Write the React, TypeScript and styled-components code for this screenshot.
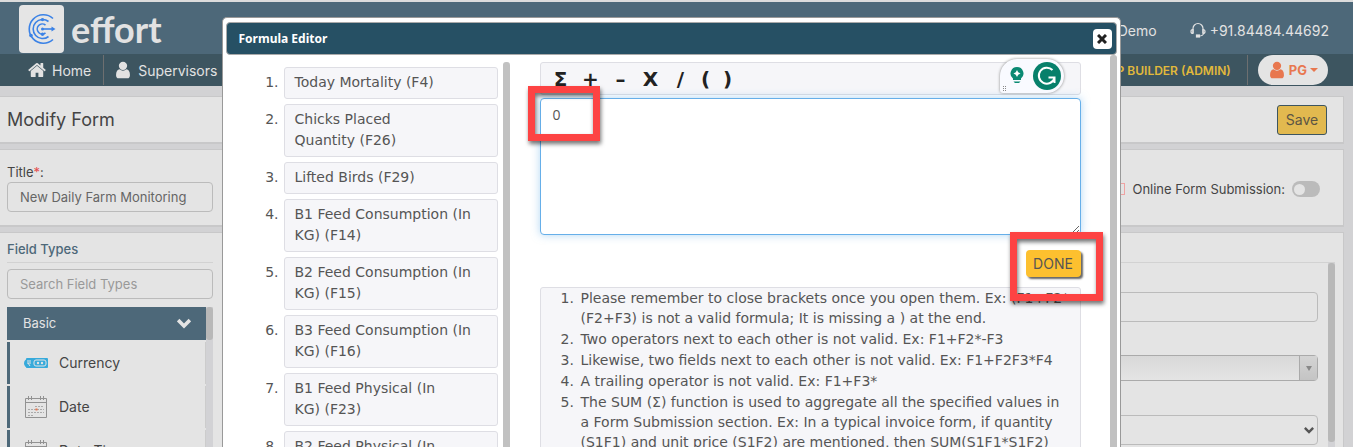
import React from "react";
import styled, { createGlobalStyle } from "styled-components";

const ui = `Inter, "Liberation Sans", sans-serif`;
const body = `"DejaVu Sans", Verdana, sans-serif`;

const GlobalStyle = createGlobalStyle`
  * { box-sizing: border-box; }
  body { margin: 0; background: #d2d2d4; font-family: ${ui}; font-size: 13px; color: #444; }
  ol, ul { margin: 0; padding: 0; list-style: none; }
  button, input, textarea, select { font: inherit; color: inherit; }
  h1, h2, h3, p { margin: 0; font-weight: 400; }
  a { color: inherit; text-decoration: none; }
`;

const Page = styled.div`
  position: relative;
  height: 100vh;
  overflow: hidden;
`;
const Header = styled.header`
  display: flex;
  justify-content: space-between;
  align-items: center;
  height: 54px;
  padding: 1px 24px 0 19px;
  border-top: 2px solid #dcdcdc;
  background: #4d6879;
  color: #e2e2e2;
`;
const Brand = styled.a`
  display: flex;
  align-items: center;
  gap: 7px;
  font: 700 36px/46px Lato, sans-serif;
`;
const BrandMark = styled.span`
  display: grid;
  place-items: center;
  width: 45px;
  height: 48px;
  border-radius: 4px;
  background: #e5e5e5;
`;
const Contact = styled.div`
  display: flex;
  align-items: center;
  gap: 33px;
  padding-top: 3px;
  font-size: 14px;
`;
const Phone = styled.a`
  display: flex;
  align-items: center;
  gap: 4px;
`;
const Nav = styled.nav`
  display: flex;
  justify-content: space-between;
  height: 32px;
  padding: 0 25px 0 18px;
  background: #3d5560;
  color: #e2e2e2;
`;
const NavGroup = styled.div`
  display: flex;
  align-items: center;
`;
const NavLink = styled.a`
  display: flex;
  align-items: center;
  gap: 6px;
  height: 30px;
  padding: 0 12px 0 10px;
  border-right: 1px solid #6d6f70;
  font-size: 14px;
`;
const Role = styled.span`
  display: flex;
  align-items: center;
  height: 30px;
  padding-right: 16px;
  margin-right: 10px;
  border-right: 1px solid #6d6f70;
  color: #e2b93b;
  font-size: 12px;
  font-weight: 600;
`;
const UserButton = styled.button`
  display: flex;
  align-items: center;
  gap: 3px;
  height: 30px;
  padding: 0 10px;
  border: 0;
  border-radius: 15px;
  background: #e4e4e4;
  color: #e8774f;
  font-weight: 700;
`;
const Main = styled.main`
  display: flex;
  flex-direction: column;
  gap: 5px;
  padding: 10px 9px 0 0;
`;
const Card = styled.section`
  display: flex;
  justify-content: space-between;
  border: 1px solid #c8c8c9;
  border-left: 0;
  border-bottom-width: 2px;
  background: #e4e4e4;
`;
const TitleCard = styled(Card)`
  align-items: center;
  height: 48px;
  padding: 0 16px 0 7px;
`;
const PageTitle = styled.h1`
  font-size: 18px;
`;
const SaveButton = styled.button`
  width: 50px;
  height: 30px;
  padding: 0;
  border: 1px solid #3d5560;
  border-radius: 3px;
  background: #e2b94f;
  color: #5c5544;
  font-size: 14px;
`;
const FormCard = styled(Card)`
  height: 78px;
  padding: 12px 23px 0 7px;
`;
const Label = styled.label`
  display: block;
  height: 20px;
  line-height: 20px;
`;
const Star = styled.span`
  color: #e64c4c;
`;
const TextInput = styled.input`
  display: block;
  width: 206px;
  height: 30px;
  padding: 0 12px;
  border: 1px solid #bbb;
  border-radius: 4px;
  background: transparent;
  color: #666;
  &::placeholder { color: #999; opacity: 1; }
`;
const SwitchRow = styled.label`
  display: flex;
  align-items: center;
  align-self: flex-start;
  gap: 7px;
  height: 20px;
  margin-top: 17px;
`;
const Flag = styled.span`
  width: 12px;
  height: 12px;
  border: 1px solid #efa3a3;
`;
const Switch = styled.input`
  appearance: none;
  display: flex;
  align-items: center;
  width: 28px;
  height: 16px;
  margin: 0;
  padding: 2px;
  border-radius: 8px;
  background: #bbb;
  &::before {
    content: "";
    width: 11px;
    height: 11px;
    border-radius: 6px;
    background: #e4e4e4;
  }
`;
const BuilderCard = styled(Card)`
  height: 400px;
  padding: 0 8px 0 7px;
`;
const Sidebar = styled.aside`
  width: 206px;
`;
const SideTitle = styled.h2`
  height: 30px;
  margin-bottom: 6px;
  border-bottom: 1px solid #d2d2d2;
  color: #4d6879;
  font-size: 13px;
  font-weight: 500;
  line-height: 32px;
`;
const Palette = styled.div`
  display: flex;
  margin-top: 8px;
`;
const Track = styled.div`
  width: 7px;
  background: #d2d2d5;
`;
const Thumb = styled.div<{ $h: number }>`
  height: ${(p) => p.$h}px;
  border-radius: 3px;
  background: #b8b8b8;
`;
const PaletteList = styled.div`
  flex: 1;
  display: flex;
  flex-direction: column;
  gap: 2px;
`;
const PaletteHead = styled.button`
  display: flex;
  align-items: center;
  justify-content: space-between;
  height: 33px;
  padding: 0 15px 2px 16px;
  border: 0;
  background: #4d6879;
  color: #e4e4e4;
`;
const PaletteItem = styled.div`
  display: flex;
  align-items: center;
  gap: 11px;
  height: 42px;
  padding-left: 14px;
  border-left: 3px solid #4d6879;
  border-right: 1px solid #ccc;
  font-size: 14px;
  line-height: 20px;
  svg { width: 24px; }
`;
const Canvas = styled.div`
  flex: 1;
  display: flex;
  margin: 29px 0 0 17px;
  border-top: 1px solid #d2d2d2;
`;
const Fields = styled.div`
  flex: 1;
  display: flex;
  flex-direction: column;
  padding: 29px 10px 0 0;
`;
const Field = styled.input`
  height: 30px;
  margin-bottom: 33px;
  border: 1px solid #bbb;
  border-radius: 4px;
  background: transparent;
`;
const Combo = styled.button`
  display: flex;
  justify-content: flex-end;
  height: 26px;
  margin-bottom: 34px;
  padding: 0;
  border: 1px solid #aaa;
  border-radius: 4px;
  background: linear-gradient(#d8d8d8, #e4e4e4);
`;
const ComboArrow = styled.span`
  display: grid;
  place-items: center;
  width: 18px;
  height: 24px;
  border-left: 1px solid #aaa;
  background: linear-gradient(#d4d4d4, #c4c4c4);
`;
const SelectWrap = styled.div`
  display: grid;
  align-items: center;
  > * { grid-area: 1 / 1; }
  svg { justify-self: end; margin-right: 4px; pointer-events: none; }
`;
const Select = styled.select`
  appearance: none;
  width: 100%;
  height: 30px;
  border: 1px solid #bbb;
  border-radius: 4px;
  background: transparent;
`;

const Overlay = styled.div`
  position: absolute;
  inset: 17px 0 0 0;
  display: flex;
  justify-content: center;
  padding-right: 11px;
`;
const Dialog = styled.section`
  position: relative;
  display: flex;
  flex-direction: column;
  width: 899px;
  padding: 4px 3px 0;
  border: 1px solid #999;
  border-bottom: 0;
  border-radius: 5px 5px 0 0;
  background: #fff;
  color: #555;
  font-family: ${body};
`;
const DialogHead = styled.header`
  display: flex;
  flex: none;
  align-items: center;
  justify-content: space-between;
  height: 33px;
  padding: 0 4px 0 12px;
  border: 1px solid #aaa;
  border-radius: 4px;
  background: #265064;
  color: #fff;
`;
const DialogTitle = styled.h2`
  font: 700 12px/20px "Noto Sans", sans-serif;
`;
const CloseButton = styled.button`
  display: grid;
  place-items: center;
  width: 19px;
  height: 20px;
  padding: 0;
  border: 0;
  border-radius: 4px;
  background: #fff;
`;
const DialogBody = styled.div`
  flex: 1;
  display: flex;
  min-height: 0;
  overflow: hidden;
`;
const FieldPane = styled.div`
  display: flex;
  gap: 5px;
  width: 284px;
  margin-top: 7px;
`;
const FieldList = styled.ol`
  flex: 1;
  display: flex;
  flex-direction: column;
  gap: 5px;
  padding-top: 5px;
`;
const FieldItem = styled.li`
  display: flex;
  font-size: 14px;
  line-height: 21px;
`;
const FieldNumber = styled.span`
  width: 58px;
  padding: 5px 5px 0 0;
  text-align: right;
`;
const FieldButton = styled.button`
  width: 214px;
  padding: 4px 10px 5px;
  border: 1px solid #dedee4;
  border-radius: 3px;
  background: #f6f6f9;
  text-align: left;
`;
const Scroll = styled.div`
  width: 7px;
  border-radius: 3px 3px 0 0;
  background: #c1c1c1;
`;
const Editor = styled.div`
  flex: 1;
  display: flex;
  flex-direction: column;
  margin: 7px 29px 0 30px;
`;
const Operators = styled.div`
  display: flex;
  flex: none;
  align-items: center;
  height: 33px;
  padding-left: 5px;
  border: 1px solid #dedee4;
  border-radius: 3px;
  background: #f6f6f9;
`;
const Operator = styled.button<{ $w: number }>`
  width: ${(p) => p.$w}px;
  padding: 0;
  border: 0;
  background: none;
  color: #222;
  font: 700 20px/30px "DejaVu Sans", sans-serif;
`;
const Formula = styled.textarea`
  display: block;
  flex: none;
  height: 137px;
  margin-top: 3px;
  padding: 6px 12px;
  border: 1px solid #66afe9;
  border-radius: 4px;
  outline: 0;
  box-shadow: 0 0 8px rgba(102, 175, 233, 0.5);
  font: 14px/20px "Open Sans", sans-serif;
`;
const DoneButton = styled.button`
  align-self: flex-end;
  flex: none;
  width: 55px;
  height: 27px;
  margin: 15px 0 10px;
  padding: 0;
  border: 0;
  border-radius: 4px;
  background: #fdc02f;
  box-shadow: 2px 2px 2px #666;
  font: 14px/27px ${ui};
`;
const Help = styled.ol`
  flex: none;
  padding: 0 0 20px 20px;
  border: 1px solid #dedee4;
  border-radius: 3px;
  background: #f6f6f9;
  font-size: 14px;
  line-height: 20px;
  white-space: pre-line;
`;
const HelpItem = styled.li`
  display: grid;
  grid-template-columns: 20px 1fr;
  margin-bottom: 1px;
`;
const Assistant = styled.div`
  position: absolute;
  top: 41px;
  right: 56px;
  display: flex;
  align-items: center;
  justify-content: space-between;
  width: 64px;
  height: 34px;
  padding: 0 2px 0 3px;
  border-radius: 17px 17px 17px 3px;
  background: #f9faff;
  box-shadow: 0 0 3px #888;
`;
const Highlight = styled.div<{ $x: number; $y: number; $w: number; $h: number }>`
  position: absolute;
  left: ${(p) => p.$x}px;
  top: ${(p) => p.$y}px;
  width: ${(p) => p.$w}px;
  height: ${(p) => p.$h}px;
  border: 7px solid #fd4343;
  filter: drop-shadow(1px 3px 2px rgba(0, 0, 0, 0.55));
  pointer-events: none;
`;

const UserIcon = ({ size = 18 }: { size?: number }) => (
  <svg width={size} height={size} viewBox="128 64 1536 1664" fill="currentColor" aria-hidden>
    <path d="M1536 1399q0 109-62.5 187t-150.5 78h-854q-88 0-150.5-78t-62.5-187q0-85 8.5-160.5t31.5-152 58.5-131 94-89 134.5-34.5q131 128 313 128t313-128q76 0 134.5 34.5t94 89 58.5 131 31.5 152 8.5 160.5zm-256-887q0 159-112.5 271.5t-271.5 112.5-271.5-112.5-112.5-271.5 112.5-271.5 271.5-112.5 271.5 112.5 112.5 271.5z" />
  </svg>
);
const HomeIcon = () => (
  <svg width="18" height="18" viewBox="64 64 1664 1664" fill="currentColor" aria-hidden>
    <path d="M1472 992v480q0 26-19 45t-45 19h-384v-384h-256v384h-384q-26 0-45-19t-19-45v-480q0-1 .5-3t.5-3l575-474 575 474q1 2 1 6zm223-69l-62 74q-8 9-21 11h-3q-13 0-21-7l-692-577-692 577q-12 8-24 7-13-2-21-11l-62-74q-8-10-7-23.5t11-21.5l719-599q32-26 76-26t76 26l244 204v-195q0-14 9-23t23-9h192q14 0 23 9t9 23v408l219 182q10 8 11 21.5t-7 23.5z" />
  </svg>
);
const LogoIcon = () => (
  <svg width="30" height="32" viewBox="0 0 30 32" fill="none" stroke="#3b82e6" strokeWidth="1.6" aria-hidden>
    <path d="M26 5.500A14.200 14.200 0 1 0 26 26.500" />
    <path d="M21.500 8.500A9.500 9.500 0 1 0 21.500 23.500" />
    <path d="M18.500 12.200A5 5 0 1 0 18.500 19.800" />
    <path d="M15 16H26" />
    <g fill="#3b82e6" stroke="none">
      <circle cx="15.500" cy="16" r="1.500" />
      <path d="M24.500 13.500l4 2.500-4 2.500z" />
      <circle cx="15.500" cy="6.600" r="1.700" />
      <circle cx="15.500" cy="21.300" r="1.700" />
      <circle cx="4" cy="22.500" r="1.800" />
    </g>
  </svg>
);
const HeadsetIcon = () => (
  <svg width="16" height="16" viewBox="0 0 16 16" fill="none" stroke="currentColor" strokeWidth="1.200" aria-hidden>
    <path d="M3 11V6.500A5 5 0 0 1 13 6.500V11" />
    <path d="M3 7.500Q1 7.500 1 9.500T3 11.500zM13 7.500q2 0 2 2t-2 2z" />
    <path d="M13.500 11.500Q13 14 9 14" />
    <rect x="6.500" y="13" width="3" height="2" fill="currentColor" />
  </svg>
);
const ChevronIcon = ({ color, size = 12 }: { color: string; size?: number }) => (
  <svg width={size} height={size} viewBox="0 0 12 12" fill="none" stroke={color} strokeWidth="3" aria-hidden>
    <path d="M1 3.500L6 8.500L11 3.500" />
  </svg>
);
const CurrencyIcon = () => (
  <svg width="24" height="10" viewBox="0 0 24 10" aria-hidden>
    <rect x="2" width="22" height="10" rx="1" fill="#37aadb" />
    <circle cx="4.500" cy="5.200" r="4.500" fill="#37aadb" />
    <path d="M3 3h4M3 5h4M4 5l2 3" stroke="#e4e4e4" fill="none" />
    <rect x="10" y="2" width="12" height="6" rx="2" fill="none" stroke="#e4e4e4" />
    <circle cx="14" cy="5" r="1.200" fill="#e4e4e4" />
    <circle cx="18" cy="5" r="1.200" fill="#e4e4e4" />
  </svg>
);
const CalendarIcon = () => (
  <svg width="24" height="24" viewBox="0 0 24 24" fill="none" stroke="#929292" aria-hidden>
    <path d="M1.500 3.500h21v19h-21zM1.500 7.500h21M4.500 1v4M7.500 1v4M16.500 1v4M19.500 1v4" />
    <path d="M11 11.500h9M4 14.500h16M4 17.500h16M4 20.500h6" strokeDasharray="2 1" stroke="#aaa" />
    <path d="M11.500 14.500h2" stroke="#e8774f" strokeWidth="2" />
  </svg>
);

const fields = [
  "Today Mortality (F4)",
  "Chicks Placed Quantity\u00a0(F26)",
  "Lifted Birds (F29)",
  "B1 Feed Consumption (In KG)\u00a0(F14)",
  "B2 Feed Consumption (In KG)\u00a0(F15)",
  "B3 Feed Consumption (In KG)\u00a0(F16)",
  "B1 Feed Physical (In KG)\u00a0(F23)",
  "B2 Feed Physical (In",
];
const rules = [
  "Please remember to close brackets once you open them. Ex: (F1+F2*\n(F2+F3) is not a valid formula; It is missing a ) at the end.",
  "Two operators next to each other is not valid. Ex: F1+F2*-F3",
  "Likewise, two fields next to each other is not valid. Ex: F1+F2F3*F4",
  "A trailing operator is not valid. Ex: F1+F3*",
  "The SUM (Σ) function is used to aggregate all the specified values in\na Form Submission section. Ex: In a typical invoice form, if quantity\n(S1F1) and unit price (S1F2) are mentioned, then SUM(S1F1*S1F2)",
];
const operators: [string, number][] = [["Σ", 30], ["+", 30], ["–", 30], ["X", 30], ["/", 30], ["(", 20], [")", 24]];

export default function App() {
  return (
    <Page>
      <GlobalStyle />
      <Header>
        <Brand href="#"><BrandMark><LogoIcon /></BrandMark>effort</Brand>
        <Contact>
          <a href="#">Demo</a>
          <Phone href="tel:+918448444692"><HeadsetIcon />+91.84484.44692</Phone>
        </Contact>
      </Header>
      <Nav>
        <NavGroup>
          <NavLink href="#"><HomeIcon />Home</NavLink>
          <NavLink href="#"><UserIcon />Supervisors</NavLink>
        </NavGroup>
        <NavGroup>
          <Role>APP BUILDER (ADMIN)</Role>
          <UserButton>
            <UserIcon />PG
            <svg width="8" height="4" viewBox="0 0 8 4" fill="currentColor" aria-hidden><path d="M0 0h8L4 4z" /></svg>
          </UserButton>
        </NavGroup>
      </Nav>
      <Main>
        <TitleCard>
          <PageTitle>Modify Form</PageTitle>
          <SaveButton>Save</SaveButton>
        </TitleCard>
        <FormCard>
          <div>
            <Label htmlFor="title">Title<Star>*</Star>:</Label>
            <TextInput id="title" defaultValue="New Daily Farm Monitoring" />
          </div>
          <SwitchRow><Flag />Online Form Submission:<Switch type="checkbox" role="switch" /></SwitchRow>
        </FormCard>
        <BuilderCard>
          <Sidebar>
            <SideTitle>Field Types</SideTitle>
            <TextInput placeholder="Search Field Types" aria-label="Search Field Types" />
            <Palette>
              <PaletteList>
                <PaletteHead>Basic<ChevronIcon color="#e4e4e4" size={14} /></PaletteHead>
                <PaletteItem><CurrencyIcon />Currency</PaletteItem>
                <PaletteItem><CalendarIcon />Date</PaletteItem>
                <PaletteItem><CalendarIcon />Date Time</PaletteItem>
              </PaletteList>
              <Track><Thumb $h={33} /></Track>
            </Palette>
          </Sidebar>
          <Canvas>
            <Fields>
              <Field aria-label="Field label" />
              <Combo aria-label="Field source">
                <ComboArrow><svg width="6" height="5" viewBox="0 0 6 5" fill="#888" aria-hidden><path d="M0 0h6L3 5z" /></svg></ComboArrow>
              </Combo>
              <SelectWrap>
                <Select aria-label="Field option" />
                <ChevronIcon color="#555" size={10} />
              </SelectWrap>
            </Fields>
            <Track><Thumb $h={179} /></Track>
          </Canvas>
        </BuilderCard>
      </Main>
      <Overlay>
        <Dialog role="dialog" aria-label="Formula Editor">
          <DialogHead>
            <DialogTitle>Formula Editor</DialogTitle>
            <CloseButton aria-label="Close">
              <svg width="10" height="10" viewBox="0 0 10 10" stroke="#222" strokeWidth="3" aria-hidden><path d="M1 1l8 8M9 1l-8 8" /></svg>
            </CloseButton>
          </DialogHead>
          <DialogBody>
            <FieldPane>
              <FieldList>
                {fields.map((f, i) => (
                  <FieldItem key={f}><FieldNumber>{i + 1}.</FieldNumber><FieldButton>{f}</FieldButton></FieldItem>
                ))}
              </FieldList>
              <Scroll />
            </FieldPane>
            <Editor>
              <Operators>
                {operators.map(([o, w]) => <Operator key={o} $w={w}>{o}</Operator>)}
              </Operators>
              <Formula aria-label="Formula" defaultValue="0" />
              <DoneButton>DONE</DoneButton>
              <Help>
                {rules.map((r, i) => <HelpItem key={r}><span>{i + 1}.</span><span>{r}</span></HelpItem>)}
              </Help>
            </Editor>
            <Scroll />
          </DialogBody>
          <Assistant>
            <svg width="24" height="32" viewBox="0 0 24 32" aria-hidden>
              <path d="M0 26h1v1H0zM2 26h1v1H2zM0 28h1v1H0zM2 28h1v1H2zM0 30h1v1H0zM2 30h1v1H2z" fill="#888" />
              <path d="M14 7a6.500 6.500 0 0 1 4 11.600V20h-8v-1.400A6.500 6.500 0 0 1 14 7zM10.500 21.500h7L16 23h-4z" fill="#0b8a73" />
              <path d="M14 10l1.200 2.300 2.300 1.200-2.300 1.200L14 17l-1.200-2.300-2.300-1.200 2.300-1.200z" fill="#fff" />
            </svg>
            <svg width="30" height="30" viewBox="0 0 30 30" fill="none" stroke="#fff" strokeWidth="2" aria-hidden>
              <circle cx="15" cy="15" r="14" fill="#07806b" stroke="none" />
              <path d="M20.500 9A8 8 0 1 0 22.500 17M16.500 16.500H22.500V22" />
            </svg>
          </Assistant>
          <Highlight $x={305} $y={68} $w={72} $h={55} />
          <Highlight $x={787} $y={214} $w={93} $h={69} />
        </Dialog>
      </Overlay>
    </Page>
  );
}
